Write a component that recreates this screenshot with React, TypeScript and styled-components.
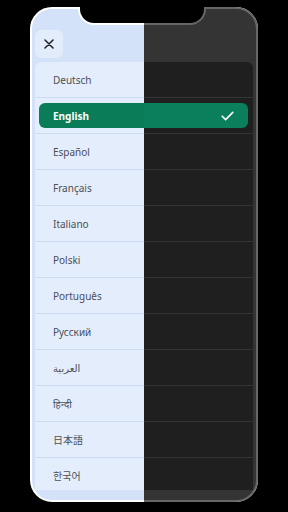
import React from "react";
import styled, { createGlobalStyle } from "styled-components";

type Theme = {
  frame: string;
  panel: string;
  button: string;
  list: string;
  sep: string;
  text: string;
  pill: string;
  icon: string;
};

const light: Theme = {
  frame: "#ffffff",
  panel: "#d3e2f8",
  button: "#e2ecfb",
  list: "#e3edfc",
  sep: "#cddcf3",
  text: "#4d4f55",
  pill: "#0a7c57",
  icon: "#1e1f22",
};

const dark: Theme = {
  frame: "#666666",
  panel: "#343434",
  button: "#3c3c3c",
  list: "#1f1f1f",
  sep: "#353535",
  text: "#d8d8d8",
  pill: "#0b7f5c",
  icon: "#eeeeee",
};

const languages = [
  "Deutsch",
  "English",
  "Español",
  "Français",
  "Italiano",
  "Polski",
  "Português",
  "Русский",
  "العربية",
  "हिन्दी",
  "日本語",
  "한국어",
];

const GlobalStyle = createGlobalStyle`
  html, body {
    margin: 0;
    padding: 0;
    width: 288px;
    height: 512px;
    background: #000;
    overflow: hidden;
  }
  * { box-sizing: border-box; }
`;

const Stage = styled.div`
  display: grid;
  width: 288px;
  height: 512px;
  padding: 7px 30px 10px 30px;
  background: #000;
  font-family: "Noto Sans", "Noto Sans CJK JP", "DejaVu Sans", sans-serif;
  & > * {
    grid-area: 1 / 1;
  }
`;

const Phone = styled.div<{ $t: Theme; $clip?: boolean }>`
  position: relative;
  width: 228px;
  height: 495px;
  border: 2px solid ${(p) => p.$t.frame};
  border-radius: 22px;
  background: ${(p) => p.$t.panel};
  display: flex;
  flex-direction: column;
  align-items: stretch;
  padding: 21px 3px 10px 3px;
  clip-path: ${(p) => (p.$clip ? "inset(0 0 0 114px)" : "none")};
`;

const Notch = styled.div<{ $t: Theme }>`
  position: absolute;
  top: -2px;
  left: 46px;
  width: 128px;
  height: 18px;
  background: #000;
  border: 2px solid ${(p) => p.$t.frame};
  border-top: none;
  border-radius: 0 0 16px 16px;
`;

const Divider = styled.div`
  justify-self: center;
  align-self: end;
  width: 1px;
  height: 476px;
  background: rgba(60, 70, 90, 0.35);
`;

const CloseButton = styled.button<{ $t: Theme }>`
  width: 28px;
  height: 28px;
  border: none;
  border-radius: 6px;
  padding: 0;
  margin: 0 0 4px 0;
  background: ${(p) => p.$t.button};
  display: flex;
  align-items: center;
  justify-content: center;
  align-self: flex-start;
`;

const List = styled.div<{ $t: Theme }>`
  flex: 1;
  min-height: 0;
  overflow: hidden;
  background: ${(p) => p.$t.list};
  border-radius: 6px 6px 0 0;
  display: flex;
  flex-direction: column;
`;

const Row = styled.div<{ $t: Theme; $selected?: boolean }>`
  flex: 0 0 36px;
  height: 36px;
  border-bottom: 1px solid ${(p) => p.$t.sep};
  display: flex;
  align-items: center;
  padding: ${(p) => (p.$selected ? "5px 5px 5px 4px" : "0 18px")};
  font-size: 10px;
  color: ${(p) => p.$t.text};
`;

const Pill = styled.div<{ $t: Theme }>`
  flex: 1;
  height: 100%;
  border-radius: 6px;
  background: ${(p) => p.$t.pill};
  display: flex;
  align-items: center;
  justify-content: space-between;
  padding: 0 14px 0 14px;
  color: #fff;
  font-weight: 700;
  font-size: 10px;
`;

const Label = styled.span`
  line-height: 1;
`;

const XIcon = ({ color }: { color: string }) => (
  <svg width="10" height="10" viewBox="0 0 10 10">
    <path d="M1 1 L9 9 M9 1 L1 9" stroke={color} strokeWidth="1.5" strokeLinecap="round" />
  </svg>
);

const CheckIcon = () => (
  <svg width="13" height="10" viewBox="0 0 13 10">
    <polyline
      points="1.2,5.2 4.6,8.6 11.8,1.4"
      fill="none"
      stroke="#fff"
      strokeWidth="1.6"
      strokeLinecap="round"
      strokeLinejoin="round"
    />
  </svg>
);

const Screen = ({ t, clip }: { t: Theme; clip?: boolean }) => (
  <Phone $t={t} $clip={clip}>
    <Notch $t={t} />
    <CloseButton $t={t} aria-label="Close">
      <XIcon color={t.icon} />
    </CloseButton>
    <List $t={t}>
      {languages.map((lang) =>
        lang === "English" ? (
          <Row key={lang} $t={t} $selected>
            <Pill $t={t}>
              <Label>{lang}</Label>
              <CheckIcon />
            </Pill>
          </Row>
        ) : (
          <Row key={lang} $t={t}>
            <Label>{lang}</Label>
          </Row>
        )
      )}
    </List>
  </Phone>
);

export default function App() {
  return (
    <>
      <GlobalStyle />
      <Stage>
        <Screen t={light} />
        <Screen t={dark} clip />
        <Divider />
      </Stage>
    </>
  );
}
